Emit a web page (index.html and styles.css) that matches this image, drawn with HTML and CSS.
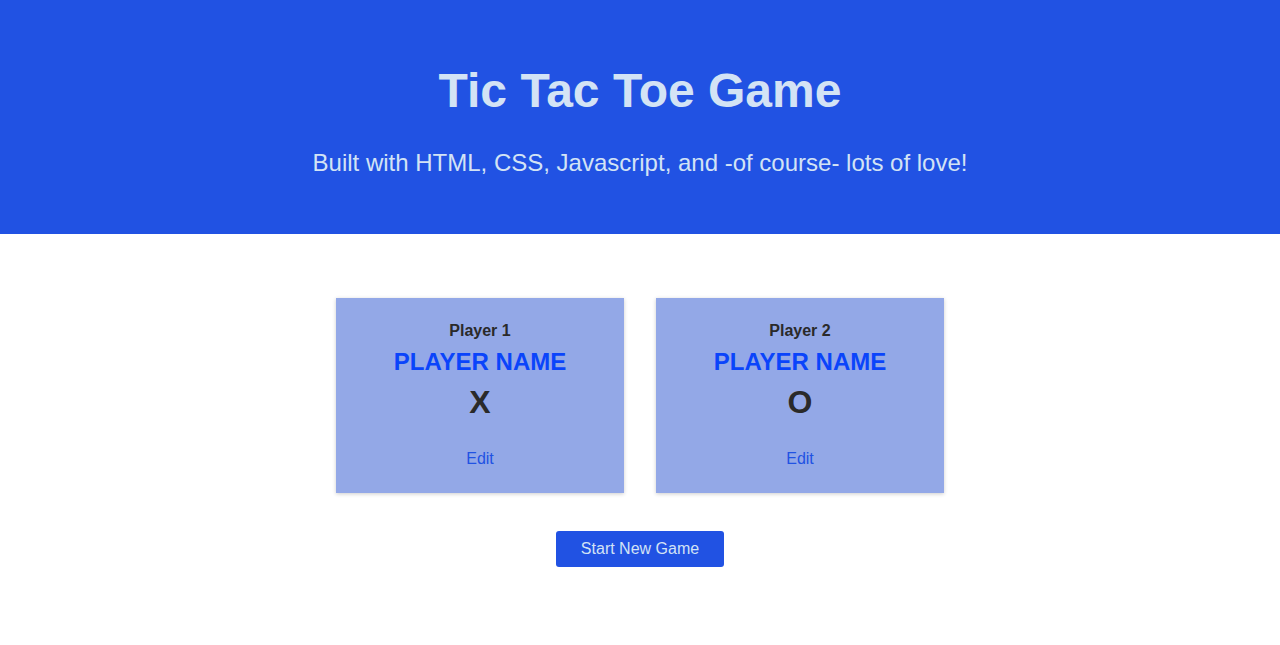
FILE: index.html
```html
<!DOCTYPE html>
<html lang="en">
<head>
<meta charset="utf-8">
<title>Tic Tac Toe</title>
<link rel="stylesheet" href="styles.css">
</head>
<body>
<header class="site-header">
  <h1 class="title">Tic Tac Toe Game</h1>
  <p class="subtitle">Built with HTML, CSS, Javascript, and -of course- lots of love!</p>
</header>
<main class="game">
  <section class="players">
    <article class="player-card">
      <h2 class="player-label">Player 1</h2>
      <h3 class="player-name">PLAYER NAME</h3>
      <p class="player-symbol">X</p>
      <button class="edit-btn">Edit</button>
    </article>
    <article class="player-card">
      <h2 class="player-label">Player 2</h2>
      <h3 class="player-name">PLAYER NAME</h3>
      <p class="player-symbol">O</p>
      <button class="edit-btn">Edit</button>
    </article>
  </section>
  <div class="actions">
    <button class="start-btn">Start New Game</button>
  </div>
</main>
</body>
</html>
```
FILE: styles.css
```css
* { box-sizing: border-box; }
body {
  margin: 0;
  font-family: "Liberation Sans", Arial, sans-serif;
  color: #2a2a2a;
  background: #ffffff;
}
.site-header {
  background: #2152e3;
  color: #d3e3f5;
  text-align: center;
  height: 234px;
  padding-top: 63px;
}
.title {
  margin: 0;
  font-size: 48px;
  line-height: 55px;
  font-weight: bold;
}
.subtitle {
  margin: 31px 0 0;
  font-size: 24px;
  line-height: 28px;
}
.game {
  padding-top: 64px;
}
.players {
  display: flex;
  justify-content: center;
  gap: 32px;
}
.player-card {
  width: 288px;
  height: 195px;
  background: #93a8e7;
  box-shadow: 0 1px 4px rgba(0,0,0,0.2);
  text-align: center;
  padding-top: 23px;
}
.player-label {
  margin: 0;
  font-size: 16px;
  line-height: 20px;
  font-weight: bold;
  color: #2a2a2a;
}
.player-name {
  margin: 7px 0 0;
  font-size: 24px;
  line-height: 28px;
  font-weight: bold;
  color: #0a44fb;
}
.player-symbol {
  margin: 8px 0 0;
  font-size: 32px;
  line-height: 37px;
  font-weight: bold;
  color: #2a2a2a;
}
.edit-btn {
  margin-top: 29px;
  font: inherit;
  font-size: 16px;
  color: #2152e3;
  background: none;
  border: none;
  padding: 0;
  cursor: pointer;
}
.actions {
  display: flex;
  justify-content: center;
  margin-top: 38px;
}
.start-btn {
  width: 168px;
  height: 36px;
  background: #2152e3;
  color: #d3e3f5;
  border: none;
  border-radius: 3px;
  font: inherit;
  font-size: 16px;
  cursor: pointer;
}
```
